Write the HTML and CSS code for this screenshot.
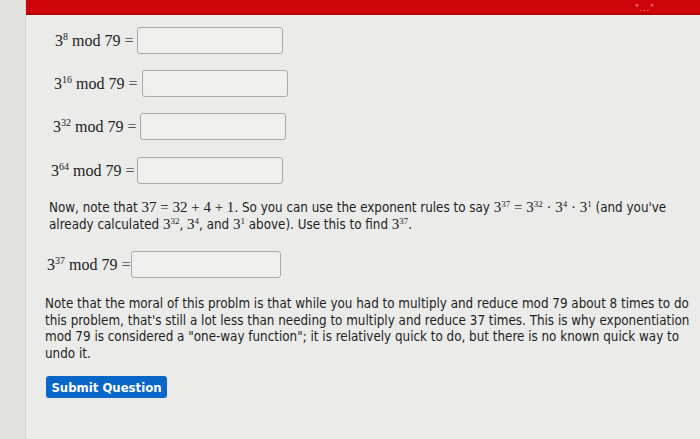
FILE: index.html
```html
<!DOCTYPE html>
<html>
<head>
<meta charset="utf-8">
<link rel="stylesheet" href="styles.css">
</head>
<body>
<div class="page">
  <div class="gutter"></div>
  <div class="main">
    <div class="topbar"><span class="topmark">"..."</span></div>
    <div class="content">
      <div class="row r1"><span class="math">3<sup>8</sup> mod 79 <span class="eq">=</span></span><span class="box"></span></div>
      <div class="row r2"><span class="math">3<sup>16</sup> mod 79 <span class="eq">=</span></span><span class="box"></span></div>
      <div class="row r3"><span class="math">3<sup>32</sup> mod 79 <span class="eq">=</span></span><span class="box"></span></div>
      <div class="row r4"><span class="math">3<sup>64</sup> mod 79 <span class="eq">=</span></span><span class="box"></span></div>
      <p class="para p1">Now, note that <span class="m">37 = 32 + 4 + 1</span>. So you can use the exponent rules to say <span class="m">3<sup>37</sup> = 3<sup>32</sup> · 3<sup>4</sup> · 3<sup>1</sup></span> (and you've already calculated <span class="m">3<sup>32</sup></span>, <span class="m">3<sup>4</sup></span>, and <span class="m">3<sup>1</sup></span> above). Use this to find <span class="m">3<sup>37</sup></span>.</p>
      <div class="row r5"><span class="math">3<sup>37</sup> mod 79 <span class="eq">=</span></span><span class="box"></span></div>
      <p class="para p2">Note that the moral of this problm is that while you had to multiply and reduce mod 79 about 8 times to do this problem, that's still a lot less than needing to multiply and reduce 37 times. This is why exponentiation mod 79 is considered a "one-way function"; it is relatively quick to do, but there is no known quick way to undo it.</p>
      <button class="submit">Submit Question</button>
    </div>
  </div>
</div>
</body>
</html>
```
FILE: styles.css
```css
html, body {
  margin: 0;
  padding: 0;
  width: 700px;
  height: 439px;
  overflow: hidden;
  background: #e8e8e6;
}
.page {
  display: flex;
  height: 439px;
}
.gutter {
  width: 25px;
  flex: none;
  background: #e2e2e0;
  border-right: 1px solid #d6d6d4;
}
.main {
  flex: 1;
  background: #ebebe9;
}
.topbar {
  height: 13px;
  background: #d0020a;
  border-bottom: 2px solid #b30008;
  position: relative;
}
.topmark {
  position: absolute;
  right: 45px;
  top: 4px;
  color: #f3b0b0;
  font: 8px "DejaVu Sans", sans-serif;
  letter-spacing: 1px;
}
.content {
  padding: 12px 0 0 21px;
  font-family: "DejaVu Sans Condensed", "DejaVu Sans", sans-serif;
  color: #1e1e1e;
}
.row {
  display: flex;
  align-items: center;
  height: 27px;
}
.math, .m {
  font-family: "Liberation Serif", "DejaVu Serif", serif;
  font-size: 16px;
  color: #222;
}
.eq { color: #555; }
sup {
  font-size: 10px;
  line-height: 1;
  vertical-align: 6px;
}
.box {
  display: block;
  width: 144px;
  height: 25px;
  margin-left: 4px;
  background: #efefed;
  border: 1px solid #a9a9a7;
  border-radius: 3px;
}
.r1 { margin-left: 8px; }
.r2 { margin-top: 16px; margin-left: 7px; }
.r2 .box { margin-left: 5px; }
.r3 { margin-top: 16px; margin-left: 6px; }
.r3 .box { margin-left: 4px; }
.r4 { margin-top: 17px; margin-left: 4px; }
.r4 .box { margin-left: 3px; }
.para {
  margin: 0;
  font-size: 13.3px;
  line-height: 16px;
  color: #1e1e1e;
}
.para .m { font-size: 15px; }
.p1 { margin-top: 15px; margin-left: 2px; width: 630px; }
.p1 sup { font-size: 9px; vertical-align: 5px; }
.r5 { margin-top: 18px; margin-left: 0; }
.r5 .box { margin-left: 1px; width: 148px; }
.p2 { margin-top: 18px; margin-left: -2px; width: 655px; line-height: 16.5px; }
.submit {
  display: block;
  margin-top: 14px;
  margin-left: -1px;
  background: #0b66c9;
  color: #fff;
  border: none;
  border-radius: 3px;
  width: 121px;
  height: 22px;
  padding: 0;
  font-family: "DejaVu Sans Condensed", "DejaVu Sans", sans-serif;
  font-size: 13px;
  font-weight: bold;
}
```
